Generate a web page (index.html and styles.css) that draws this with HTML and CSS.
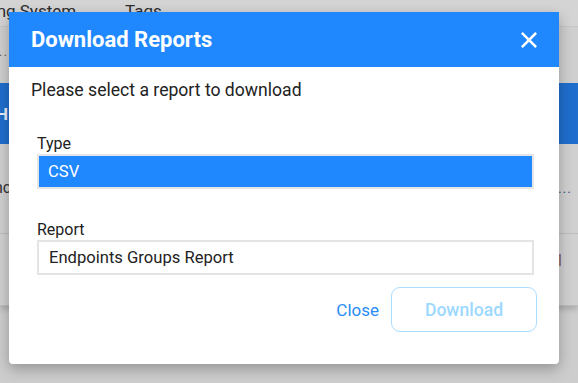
FILE: index.html
```html
<!DOCTYPE html>
<html>
<head>
<meta charset="utf-8">
<link rel="stylesheet" href="styles.css">
</head>
<body>
<div class="page">
  <div class="thead">
    <span class="col-os"><span class="shift">Operating System</span></span>
    <span class="col-tags">Tags</span>
  </div>
  <div class="row row-a">
    <span class="dots left">....</span>
  </div>
  <div class="bluebar"><span class="bar-text">H</span></div>
  <div class="row row-b">
    <span class="cut">nc</span>
    <span class="dots right">....</span>
  </div>
  <div class="row row-c">
    <span class="num">1</span>
  </div>
</div>
<div class="modal">
  <div class="modal-header">
    <h2 class="modal-title">Download Reports</h2>
    <button class="close-x" aria-label="Close">
      <svg width="16" height="16" viewBox="0 0 16 16"><path d="M1.8 1.8 L14.2 14.2 M14.2 1.8 L1.8 14.2" stroke="#fff" stroke-width="2.6" stroke-linecap="square"/></svg>
    </button>
  </div>
  <div class="modal-body">
    <p class="intro">Please select a report to download</p>
    <div class="field first">
      <label class="label">Type</label>
      <div class="select selected">CSV</div>
    </div>
    <div class="field">
      <label class="label">Report</label>
      <div class="select">Endpoints Groups Report</div>
    </div>
    <div class="actions">
      <button class="btn-link">Close</button>
      <button class="btn-outline">Download</button>
    </div>
  </div>
</div>
</body>
</html>
```
FILE: styles.css
```css
html, body {
  margin: 0;
  padding: 0;
}
body {
  width: 578px;
  height: 383px;
  overflow: hidden;
  position: relative;
  font-family: Roboto, "Noto Sans", sans-serif;
  background: #cdcdce;
}
.page {
  display: flex;
  flex-direction: column;
  background: #d3d3d4;
  height: 305px;
  box-shadow: 0 3px 6px rgba(0,0,0,0.18);
  border-bottom: 1px solid #bdbdbe;
}
.thead {
  height: 27px;
  display: flex;
  font-size: 17px;
  color: #2e2e2e;
  line-height: 20px;
  padding-top: 1px;
  box-sizing: border-box;
  border-bottom: 1px solid #c6c6c7;
  background: #d4d4d5;
}
.col-os {
  width: 125px;
  overflow: hidden;
  white-space: nowrap;
}
.shift {
  margin-left: -58px;
}
.row {
  display: flex;
  color: #444;
  font-size: 16px;
}
.row-a {
  height: 56px;
  background: #cfcfd0;
}
.dots {
  color: #666;
  font-size: 14px;
  letter-spacing: 1px;
}
.dots.left {
  margin-top: 16px;
  margin-left: -6px;
}
.bluebar {
  height: 61px;
  background: #1f6ecd;
  display: flex;
  align-items: center;
}
.bar-text {
  color: #e8eef8;
  font-weight: 700;
  font-size: 17px;
  margin-left: -4px;
}
.row-b {
  height: 90px;
  justify-content: space-between;
  border-bottom: 1px solid #bcbcbd;
  box-sizing: border-box;
  background: #d0d0d1;
}
.cut {
  margin-top: 34px;
  margin-left: -6px;
  color: #333;
}
.dots.right {
  margin-top: 36px;
  margin-right: 6px;
  color: #3a5a8a;
}
.row-c {
  flex: 1;
  justify-content: flex-end;
  background: #d0d0d1;
}
.num {
  margin-top: 17px;
  margin-right: 14px;
  color: #8a6060;
  font-size: 16px;
}
.modal {
  position: absolute;
  left: 9px;
  top: 12px;
  width: 550px;
  height: 352px;
  background: #fff;
  border-radius: 0 0 4px 4px;
  box-shadow: 0 5px 14px rgba(0,0,0,0.28);
  overflow: hidden;
}
.modal-header {
  height: 55px;
  background: #2088ff;
  display: flex;
  align-items: center;
  justify-content: space-between;
  padding: 0 22px 0 22px;
}
.modal-title {
  margin: 0;
  color: #fff;
  font-size: 22px;
  font-weight: 700;
  line-height: 26px;
}
.close-x {
  background: none;
  border: 0;
  padding: 0;
  width: 16px;
  height: 16px;
  display: flex;
}
.modal-body {
  padding: 12px 24px 0 22px;
}
.intro {
  margin: 0;
  font-size: 17.6px;
  color: #222;
  line-height: 22px;
}
.field {
  margin-left: 6px;
  margin-right: 1px;
}
.field.first {
  margin-top: 33px;
}
.label {
  display: block;
  font-size: 16px;
  color: #222;
  line-height: 19px;
  margin-bottom: 1px;
}
.select {
  height: 35px;
  border: 2px solid #e4e4e4;
  box-sizing: border-box;
  padding-left: 10px;
  display: flex;
  align-items: center;
  font-size: 16.6px;
  color: #222;
}
.select.selected {
  background: #2088ff;
  color: #fff;
  border-color: #e6e6e6;
  margin-bottom: 31px;
  padding-left: 9px;
}
.actions {
  display: flex;
  justify-content: flex-end;
  align-items: center;
  gap: 12px;
  margin-top: 12px;
  margin-right: -2px;
}
.btn-link {
  background: none;
  border: 0;
  padding: 0;
  font-family: inherit;
  font-size: 17px;
  color: #2a8cf5;
}
.btn-outline {
  width: 146px;
  height: 45px;
  background: #fff;
  border: 1px solid #a9dcff;
  border-radius: 9px;
  font-family: inherit;
  font-size: 17.6px;
  font-weight: 500;
  color: #9cd8ff;
}
```
